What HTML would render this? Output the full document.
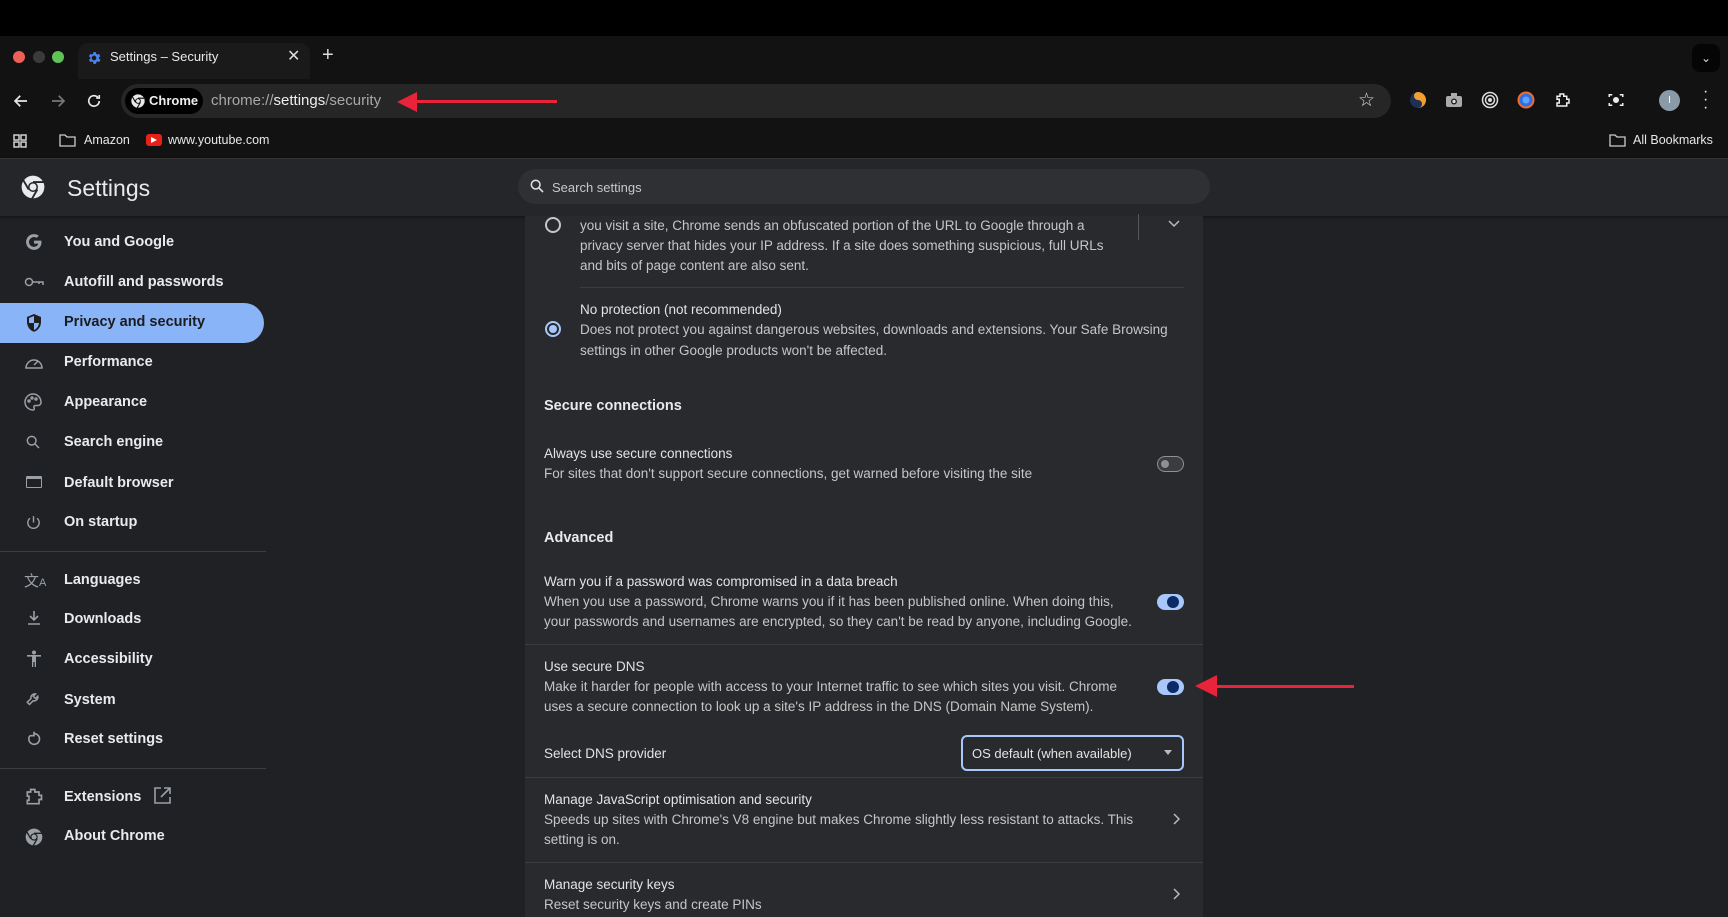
<!DOCTYPE html>
<html><head><meta charset="utf-8"><style>
*{margin:0;padding:0;box-sizing:border-box}
body{width:1728px;height:917px;overflow:hidden;background:#202124;font-family:"Liberation Sans",Arial,sans-serif;position:relative;color:#e8eaed}
.a{position:absolute}
.top{left:0;top:0;width:1728px;height:160px;background:#121212}
.sb{font-size:14.5px;font-weight:bold;color:#e8eaed}
.t{font-size:13.5px;color:#e3e3e3;white-space:nowrap}
.d{font-size:13.5px;color:#c4c7c5;white-space:nowrap}
.sep{height:1px;background:#3c3d40}
.tog{width:27px;height:16px;border-radius:8px}
</style></head><body>
<div class="a top"></div>
<div class="a" style="left:0;top:0;width:1728px;height:36px;background:#000"></div>
<div class="a" style="left:13px;top:51px;width:12px;height:12px;border-radius:6px;background:#ee5f57"></div>
<div class="a" style="left:33px;top:51px;width:12px;height:12px;border-radius:6px;background:#3a3a3a"></div>
<div class="a" style="left:52px;top:51px;width:12px;height:12px;border-radius:6px;background:#5fc455"></div>
<div class="a" style="left:78px;top:43px;width:232px;height:36px;background:#1a1a1a;border-radius:10px 10px 0 0"></div>
<svg class="a" style="left:86px;top:50px" width="16" height="16" viewBox="0 0 24 24"><path fill="#4a82f0" d="M19.4 13a7.6 7.6 0 000-2l2.1-1.6-2-3.5-2.5 1a7.3 7.3 0 00-1.7-1L15 3.2h-4l-.4 2.7a7.3 7.3 0 00-1.7 1l-2.5-1-2 3.5L6.6 11a7.6 7.6 0 000 2l-2.1 1.6 2 3.5 2.5-1a7.3 7.3 0 001.7 1l.4 2.7h4l.4-2.7a7.3 7.3 0 001.7-1l2.5 1 2-3.5zM12 15.5A3.5 3.5 0 1112 8.5a3.5 3.5 0 010 7z"/></svg>
<div class="a" style="left:110px;top:49px;font-size:13px;color:#e8e8e8">Settings – Security</div>
<div class="a" style="left:287px;top:46px;font-size:16px;color:#ddd">✕</div>
<div class="a" style="left:322px;top:44px;font-size:20px;color:#ddd">+</div>
<div class="a" style="left:1692px;top:44px;width:28px;height:28px;border-radius:8px;background:#050505;color:#ddd;font-size:12px;text-align:center;line-height:28px">⌄</div>
<svg class="a" style="left:12px;top:92px" width="18" height="18" viewBox="0 0 24 24" fill="none" stroke="#e8e8e8" stroke-width="2.2"><path d="M20 12H5M11 5l-7 7 7 7"/></svg>
<svg class="a" style="left:49px;top:92px" width="18" height="18" viewBox="0 0 24 24" fill="none" stroke="#777" stroke-width="2.2"><path d="M4 12h15M13 5l7 7-7 7"/></svg>
<svg class="a" style="left:85px;top:92px" width="18" height="18" viewBox="0 0 24 24" fill="none" stroke="#e8e8e8" stroke-width="2.2"><path d="M19 12a7 7 0 11-2-5M19 4v4h-4"/></svg>
<div class="a" style="left:121px;top:84px;width:1270px;height:34px;border-radius:17px;background:#262626"></div>
<div class="a" style="left:125px;top:88px;width:78px;height:26px;border-radius:13px;background:#000"></div>
<svg class="a" style="left:130px;top:93px" width="16" height="16" viewBox="0 0 24 24"><circle cx="12" cy="12" r="10" fill="#e8e8e8"/><circle cx="12" cy="12" r="4.2" fill="#000"/><circle cx="12" cy="12" r="2.8" fill="#e8e8e8"/><path d="M12 7.8h9M8.4 14.1L3.8 6M15.6 14.1L11 21.9" stroke="#000" stroke-width="1.6"/></svg>
<div class="a" style="left:149px;top:93px;font-size:13px;font-weight:bold;color:#eee">Chrome</div>
<div class="a" style="left:211px;top:92px;font-size:15px;color:#a8a8a8">chrome://<span style="color:#eee">settings</span>/security</div>
<div class="a" style="left:405px;top:100px;width:152px;height:3px;background:#e8233a"></div>
<svg class="a" style="left:397px;top:92px" width="20" height="20"><path d="M0 10L20 0V20Z" fill="#e8233a"/></svg>
<div class="a" style="left:1358px;top:89px;font-size:19px;color:#ddd">☆</div>
<svg class="a" style="left:1409px;top:91px" width="18" height="18" viewBox="0 0 18 18"><circle cx="9" cy="9" r="8" fill="#1f2f55"/><path d="M9 1a8 8 0 010 16A4 4 0 009 9 4 4 0 019 1z" fill="#f0a030"/></svg>
<svg class="a" style="left:1445px;top:92px" width="18" height="16" viewBox="0 0 18 16"><rect x="1" y="4" width="16" height="11" rx="2" fill="#aaa"/><rect x="6" y="1" width="6" height="4" fill="#aaa"/><circle cx="9" cy="9.5" r="3" fill="#222"/><circle cx="9" cy="9.5" r="1.6" fill="#ddd"/></svg>
<svg class="a" style="left:1481px;top:91px" width="18" height="18"><circle cx="9" cy="9" r="7.5" fill="none" stroke="#ddd" stroke-width="1.5"/><circle cx="9" cy="9" r="4.5" fill="none" stroke="#ddd" stroke-width="1.5"/><circle cx="9" cy="9" r="2" fill="#ddd"/></svg>
<svg class="a" style="left:1517px;top:91px" width="18" height="18"><circle cx="9" cy="9" r="8.5" fill="#f46b2a"/><circle cx="9" cy="9" r="6.5" fill="#2d6fe8"/><circle cx="9" cy="9" r="3.5" fill="#5fa5ff"/></svg>
<svg class="a" style="left:1554px;top:91px" width="18" height="18" viewBox="0 0 24 24" fill="none" stroke="#eee" stroke-width="2"><path d="M4 7h4V4h5v3h4v4h3v5h-3v4H4v-4h3v-5H4z"/></svg>
<svg class="a" style="left:1607px;top:91px" width="18" height="18" viewBox="0 0 24 24" fill="none" stroke="#eee" stroke-width="2"><path d="M3 8V5h4M17 5h4v3M21 16v3h-4M7 19H3v-3"/><circle cx="12" cy="12" r="3" fill="#eee"/></svg>
<div class="a" style="left:1659px;top:90px;width:21px;height:21px;border-radius:11px;background:#8a9aa6;color:#fff;font-size:10px;text-align:center;line-height:21px">I</div>
<div class="a" style="left:1703px;top:88px;font-size:16px;color:#eee;line-height:8px;width:6px">·<br>·<br>·</div>
<svg class="a" style="left:13px;top:134px" width="14" height="14"><rect x="1" y="1" width="5" height="5" fill="none" stroke="#ddd" stroke-width="1.4"/><rect x="8" y="1" width="5" height="5" fill="none" stroke="#ddd" stroke-width="1.4"/><rect x="1" y="8" width="5" height="5" fill="none" stroke="#ddd" stroke-width="1.4"/><rect x="8" y="8" width="5" height="5" fill="none" stroke="#ddd" stroke-width="1.4"/></svg>
<svg class="a" style="left:59px;top:133px" width="17" height="14"><path d="M1 2h5l2 2h8v9H1z" fill="none" stroke="#ccc" stroke-width="1.3"/></svg>
<div class="a" style="left:84px;top:133px;font-size:12.5px;color:#e8e8e8">Amazon</div>
<div class="a" style="left:146px;top:134px;width:16px;height:12px;border-radius:3px;background:#e62117"></div>
<svg class="a" style="left:151px;top:137px" width="6" height="6"><path d="M0 0L6 3L0 6Z" fill="#fff"/></svg>
<div class="a" style="left:168px;top:133px;font-size:12.5px;color:#e8e8e8">www.youtube.com</div>
<svg class="a" style="left:1609px;top:133px" width="17" height="14"><path d="M1 2h5l2 2h8v9H1z" fill="none" stroke="#ccc" stroke-width="1.3"/></svg>
<div class="a" style="left:1633px;top:133px;font-size:12.5px;color:#e8e8e8">All Bookmarks</div>
<div class="a" style="left:0;top:158px;width:1728px;height:1px;background:#3a3a3a"></div>
<div class="a" style="left:0;top:159px;width:1728px;height:57px;background:#25262a;box-shadow:0 1px 3px rgba(0,0,0,.5)"></div>
<svg class="a" style="left:20px;top:174px" width="26" height="26" viewBox="0 0 24 24"><circle cx="12" cy="12" r="10.5" fill="#e8eaed"/><circle cx="12" cy="12" r="4.6" fill="#25262a"/><circle cx="12" cy="12" r="3.2" fill="#e8eaed"/><path d="M12 7.4h10M8 14.3L3 5.6M16 14.3l-5 8.7" stroke="#25262a" stroke-width="1.7"/></svg>
<div class="a" style="left:67px;top:175px;font-size:23px;color:#e8eaed">Settings</div>
<div class="a" style="left:518px;top:169px;width:692px;height:35px;border-radius:18px;background:#2f3033"></div>
<svg class="a" style="left:529px;top:178px" width="16" height="16" viewBox="0 0 24 24" fill="none" stroke="#ddd" stroke-width="2.4"><circle cx="10" cy="10" r="6.5"/><path d="M15 15l6 6"/></svg>
<div class="a" style="left:552px;top:180px;font-size:13px;color:#c8c8c8">Search settings</div>
<div class="a" style="left:0;top:303px;width:264px;height:40px;background:#8ab4f8;border-radius:0 20px 20px 0"></div>
<svg class="a" style="left:24px;top:232px" width="20" height="20" viewBox="0 0 24 24"><path d="M21 12.2c0-.7-.1-1.3-.2-1.9H12v3.6h5.1a4.4 4.4 0 01-1.9 2.9 6 6 0 01-9-3.1 6 6 0 019-6.6l2.6-2.6A9.5 9.5 0 1012 21.5c5.2 0 9-3.6 9-9.3z" fill="#9aa0a6"/></svg>
<div class="a sb" style="left:64px;top:234px">You and Google</div>
<svg class="a" style="left:24px;top:274px" width="20" height="16" viewBox="0 0 20 16" fill="none" stroke="#9aa0a6" stroke-width="1.5"><circle cx="5" cy="8" r="3.5"/><path d="M8.5 8H19v3M15 8v2"/></svg>
<div class="a sb" style="left:64px;top:274px">Autofill and passwords</div>
<svg class="a" style="left:25px;top:313px" width="18" height="20" viewBox="0 0 18 20"><path d="M9 1L2 4v5c0 4.5 3 8.5 7 9.8 4-1.3 7-5.3 7-9.8V4z" fill="#1f1f1f"/><path d="M9 3v7H4V5zM9 10h5c-.4 3.4-2.5 6-5 7z" fill="#8ab4f8"/></svg>
<div class="a sb" style="left:64px;top:314px;color:#1b1c1f">Privacy and security</div>
<svg class="a" style="left:24px;top:354px" width="20" height="16" viewBox="0 0 20 16" fill="none" stroke="#9aa0a6" stroke-width="1.5"><path d="M2 14a8 8 0 1116 0zM10 11l4-4"/></svg>
<div class="a sb" style="left:64px;top:354px">Performance</div>
<svg class="a" style="left:24px;top:393px" width="18" height="18" viewBox="0 0 18 18" fill="none" stroke="#9aa0a6" stroke-width="1.5"><path d="M9 1a8 8 0 000 16c1.5 0 1.5-1.5 1-2.5s0-2 1.5-2H14a3 3 0 003-3C17 4.5 13.4 1 9 1z"/><circle cx="5" cy="8" r="1"/><circle cx="8" cy="5" r="1"/><circle cx="12" cy="6" r="1"/></svg>
<div class="a sb" style="left:64px;top:394px">Appearance</div>
<svg class="a" style="left:25px;top:434px" width="16" height="16" viewBox="0 0 24 24" fill="none" stroke="#9aa0a6" stroke-width="2.2"><circle cx="10" cy="10" r="6.5"/><path d="M15 15l6 6"/></svg>
<div class="a sb" style="left:64px;top:434px">Search engine</div>
<div class="a" style="left:26px;top:476px;width:16px;height:12px;border:1.8px solid #9aa0a6;border-top-width:3px;border-radius:1px"></div>
<div class="a sb" style="left:64px;top:475px">Default browser</div>
<svg class="a" style="left:25px;top:514px" width="17" height="17" viewBox="0 0 24 24" fill="none" stroke="#9aa0a6" stroke-width="2"><path d="M12 3v9M7 6a8 8 0 1010 0"/></svg>
<div class="a sb" style="left:64px;top:514px">On startup</div>
<div class="a" style="left:0;top:551px;width:266px;height:1px;background:#3c3d40"></div>
<div class="a" style="left:24px;top:570px;font-size:15px;color:#9aa0a6">文<span style="font-size:11px">A</span></div>
<div class="a sb" style="left:64px;top:572px">Languages</div>
<svg class="a" style="left:26px;top:610px" width="16" height="16" viewBox="0 0 16 16" fill="none" stroke="#9aa0a6" stroke-width="1.6"><path d="M8 1v9M4 6l4 4 4-4M2 14h12"/></svg>
<div class="a sb" style="left:64px;top:611px">Downloads</div>
<svg class="a" style="left:26px;top:650px" width="16" height="18" viewBox="0 0 16 18" fill="#9aa0a6"><circle cx="8" cy="2.5" r="2"/><path d="M1 5h14v1.6H10V17H8.7v-5H7.3v5H6V6.6H1z"/></svg>
<div class="a sb" style="left:64px;top:651px">Accessibility</div>
<svg class="a" style="left:25px;top:691px" width="18" height="18" viewBox="0 0 24 24" fill="none" stroke="#9aa0a6" stroke-width="2"><path d="M14 4a5 5 0 00-6 6l-5 5 3 3 5-5a5 5 0 006-6l-3 3-3-3z"/></svg>
<div class="a sb" style="left:64px;top:692px">System</div>
<svg class="a" style="left:26px;top:731px" width="16" height="16" viewBox="0 0 24 24" fill="none" stroke="#9aa0a6" stroke-width="2.4"><path d="M6 7a8 8 0 106-3M12 1v6H6"/></svg>
<div class="a sb" style="left:64px;top:731px">Reset settings</div>
<div class="a" style="left:0;top:768px;width:266px;height:1px;background:#3c3d40"></div>
<svg class="a" style="left:24px;top:787px" width="20" height="20" viewBox="0 0 24 24" fill="none" stroke="#9aa0a6" stroke-width="2"><path d="M4 6h4V3h5v3h5v4h3v5h-3v5H4v-4h2v-5H4z"/></svg>
<div class="a sb" style="left:64px;top:789px">Extensions</div>
<svg class="a" style="left:154px;top:787px" width="17" height="17" viewBox="0 0 17 17" fill="none" stroke="#9aa0a6" stroke-width="1.6"><path d="M7 1H1v15h15v-6M10 1h6v6M16 1L7 10"/></svg>
<svg class="a" style="left:24px;top:827px" width="20" height="20" viewBox="0 0 24 24"><circle cx="12" cy="12" r="10" fill="#9aa0a6"/><circle cx="12" cy="12" r="4.4" fill="#202124"/><circle cx="12" cy="12" r="3" fill="#9aa0a6"/><path d="M12 7.6h10M8.2 14.2L3.3 5.7M15.8 14.2L11 22.5" stroke="#202124" stroke-width="1.6"/></svg>
<div class="a sb" style="left:64px;top:828px">About Chrome</div>
<div class="a" style="left:525px;top:216px;width:678px;height:701px;background:#292a2d"></div>
<div class="a" style="left:545px;top:217px;width:16px;height:16px;border-radius:8px;border:2px solid #c4c7c5"></div>
<div class="a d" style="left:580px;top:216px;line-height:20px">you visit a site, Chrome sends an obfuscated portion of the URL to Google through a<br>privacy server that hides your IP address. If a site does something suspicious, full URLs<br>and bits of page content are also sent.</div>
<div class="a" style="left:1138px;top:214px;width:1px;height:26px;background:#555"></div>
<svg class="a" style="left:1168px;top:219px" width="12" height="10"><path d="M1 2l5 5 5-5" fill="none" stroke="#bbb" stroke-width="1.5"/></svg>
<div class="a sep" style="left:580px;top:287px;width:604px"></div>
<div class="a t" style="left:580px;top:302px">No protection (not recommended)</div>
<div class="a d" style="left:580px;top:320px;line-height:20.5px">Does not protect you against dangerous websites, downloads and extensions. Your Safe Browsing<br>settings in other Google products won't be affected.</div>
<div class="a" style="left:545px;top:321px;width:16px;height:16px;border-radius:8px;border:2px solid #a8c7fa;background:#292a2d"></div>
<div class="a" style="left:549px;top:325px;width:8px;height:8px;border-radius:4px;background:#a8c7fa"></div>
<div class="a" style="left:544px;top:398px;font-size:14.5px;font-weight:bold;color:#e8eaed">Secure connections</div>
<div class="a t" style="left:544px;top:446px">Always use secure connections</div>
<div class="a d" style="left:544px;top:466px">For sites that don't support secure connections, get warned before visiting the site</div>
<div class="a tog" style="left:1157px;top:456px;border:1.5px solid #8e918f;background:#3b3c3f"></div>
<div class="a" style="left:1161px;top:460px;width:8px;height:8px;border-radius:4px;background:#8e918f"></div>
<div class="a" style="left:544px;top:530px;font-size:14.5px;font-weight:bold;color:#e8eaed">Advanced</div>
<div class="a t" style="left:544px;top:574px">Warn you if a password was compromised in a data breach</div>
<div class="a d" style="left:544px;top:592px;line-height:20px">When you use a password, Chrome warns you if it has been published online. When doing this,<br>your passwords and usernames are encrypted, so they can't be read by anyone, including Google.</div>
<div class="a tog" style="left:1157px;top:594px;background:#a8c7fa"></div>
<div class="a" style="left:1167px;top:596px;width:12px;height:12px;border-radius:6px;background:#0b2a66"></div>
<div class="a sep" style="left:525px;top:644px;width:678px"></div>
<div class="a t" style="left:544px;top:659px">Use secure DNS</div>
<div class="a d" style="left:544px;top:677px;line-height:20px">Make it harder for people with access to your Internet traffic to see which sites you visit. Chrome<br>uses a secure connection to look up a site's IP address in the DNS (Domain Name System).</div>
<div class="a tog" style="left:1157px;top:679px;background:#a8c7fa"></div>
<div class="a" style="left:1167px;top:681px;width:12px;height:12px;border-radius:6px;background:#0b2a66"></div>
<div class="a" style="left:1204px;top:685px;width:150px;height:3px;background:#e8233a"></div>
<svg class="a" style="left:1195px;top:675px" width="22" height="22"><path d="M0 11L22 0V22Z" fill="#e8233a"/></svg>
<div class="a t" style="left:544px;top:746px">Select DNS provider</div>
<div class="a" style="left:961px;top:735px;width:223px;height:36px;border:2px solid #a8c7fa;border-radius:6px"></div>
<div class="a" style="left:972px;top:746px;font-size:13px;color:#e3e3e3">OS default (when available)</div>
<svg class="a" style="left:1164px;top:750px" width="8" height="5"><path d="M0 0h8L4 5z" fill="#bbb"/></svg>
<div class="a sep" style="left:525px;top:777px;width:678px"></div>
<div class="a t" style="left:544px;top:792px">Manage JavaScript optimisation and security</div>
<div class="a d" style="left:544px;top:810px;line-height:20px">Speeds up sites with Chrome's V8 engine but makes Chrome slightly less resistant to attacks. This<br>setting is on.</div>
<svg class="a" style="left:1172px;top:813px" width="8" height="12"><path d="M2 1l5 5-5 5" fill="none" stroke="#bbb" stroke-width="1.5"/></svg>
<div class="a sep" style="left:525px;top:862px;width:678px"></div>
<div class="a t" style="left:544px;top:877px">Manage security keys</div>
<div class="a d" style="left:544px;top:897px">Reset security keys and create PINs</div>
<svg class="a" style="left:1172px;top:888px" width="8" height="12"><path d="M2 1l5 5-5 5" fill="none" stroke="#bbb" stroke-width="1.5"/></svg>
</body></html>
